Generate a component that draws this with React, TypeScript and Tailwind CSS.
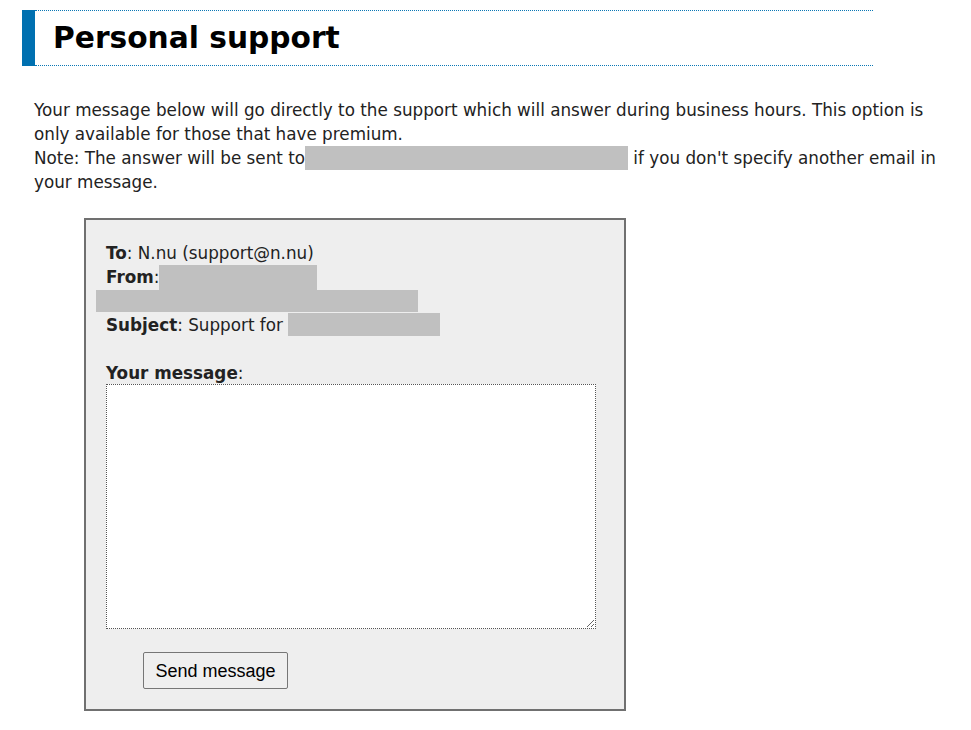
import React from 'react';

const Gray = ({ className }: { className: string }) => (
    <span className={'inline-block bg-[#c0c0c0] align-top ' + className}></span>
);

const App = () => {
    return (
        <div className="bg-white min-h-[730px] pt-[10px] text-[#222] font-['DejaVu_Sans',Verdana,sans-serif]">
            <div className="ml-[22px] w-[851px] flex">
                <div className="w-[13px] h-[56px] bg-[#0070b0]"></div>
                <div className="flex-1 flex items-center border-y border-dotted border-[#0a77b5]">
                    <h1 className="pl-[18px] text-[29.7px] font-bold text-black leading-none">Personal support</h1>
                </div>
            </div>

            <div className="ml-[34px] w-[910px] mt-[32px] text-[16.8px] leading-[24px]">
                <p>Your message below will go directly to the support which will answer during business hours. This option is only available for those that have premium.</p>
                <p>
                    Note: The answer will be sent to<Gray className="w-[323px] h-[24px]" /> if you don't specify another email in your message.
                </p>
            </div>

            <div className="ml-[84px] mt-[24px] w-[542px] border-2 border-[#707070] bg-[#eeeeee] px-[20px] pt-[21px] pb-[20px] text-[16.8px] leading-[24px]">
                <div>
                    <b>To</b>: N.nu (support@n.nu)
                </div>
                <div className="flex">
                    <b>From</b>:<Gray className="w-[158px] h-[25px]" />
                </div>
                <div className="-ml-[10px] w-[322px] h-[22px] bg-[#c0c0c0]"></div>
                <div className="mt-[1px]">
                    <b>Subject</b>: Support for <Gray className="w-[152px] h-[23px]" />
                </div>
                <div className="mt-[24px]">
                    <b>Your message</b>:
                </div>
                <textarea className="block -mt-[1px] w-[490px] h-[245px] bg-white border border-dotted border-[#555]"></textarea>
                <button className="ml-[37px] mt-[23px] h-[37px] w-[145px] border border-[#767676] rounded-[2px] bg-[#efefef] text-[18px] text-black font-['Liberation_Sans',Arial,sans-serif]">
                    Send message
                </button>
            </div>
        </div>
    );
};

export default App;
